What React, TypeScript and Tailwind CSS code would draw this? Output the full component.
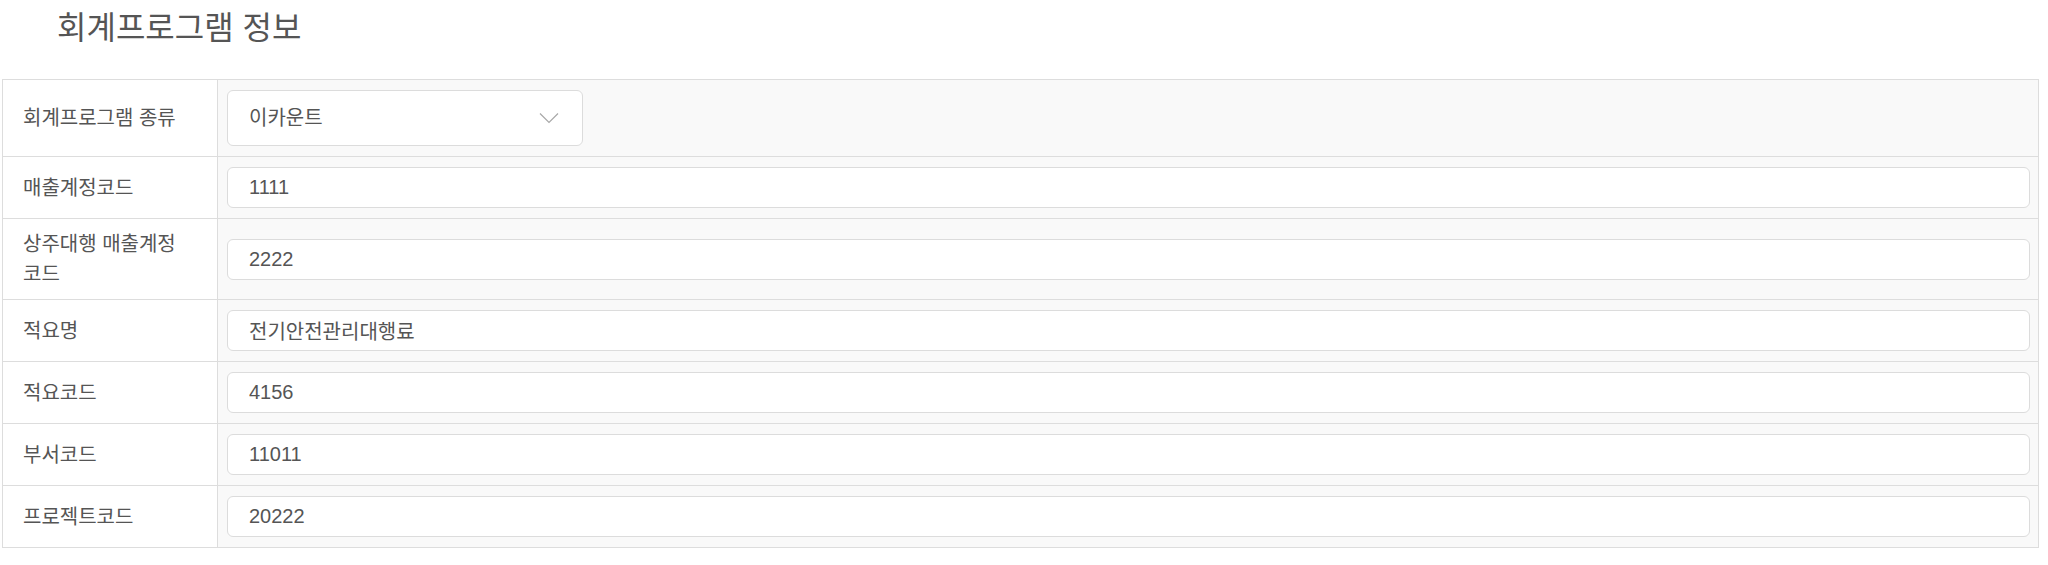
import React from "react";

const fields = [
    { label: "매출계정코드", value: "1111" },
    { label: "상주대행 매출계정 코드", value: "2222" },
    { label: "적요명", value: "전기안전관리대행료" },
    { label: "적요코드", value: "4156" },
    { label: "부서코드", value: "11011" },
    { label: "프로젝트코드", value: "20222" },
];

const ChevronDown = () => (
    <svg width="20" height="12" viewBox="0 0 20 12" fill="none" stroke="#a8a8a8" strokeWidth="1.2">
        <path d="M1 1.5 L10 10.5 L19 1.5" />
    </svg>
);

const LabelCell = ({ children }: { children: React.ReactNode }) => (
    <td className="w-[215px] border border-[#dddddd] bg-white px-5 py-[10px] text-left align-middle leading-[30px] text-[#555555]">
        {children}
    </td>
);

export default function App() {
    return (
        <div className="min-h-[565px] bg-white font-['Liberation_Sans','Noto_Sans_CJK_KR',sans-serif] text-[20px]">
            <h2 className="pl-[57px] pt-[4px] text-[32px] leading-[48px] font-normal text-[#555555]">
                회계프로그램 정보
            </h2>
            <div className="ml-[2px] mr-[9px] mt-[27px]">
                <table className="w-full border-collapse border border-[#dddddd]">
                    <tbody>
                        <tr>
                            <LabelCell>회계프로그램 종류</LabelCell>
                            <td className="border border-[#dddddd] bg-[#f9f9f9] py-[10px] pl-[9px] pr-[9px]">
                                <div className="flex h-[56px] w-[356px] items-center justify-between rounded-[6px] border border-[#dcdcdc] bg-white pl-[21px] pr-[23px] text-[#555555]">
                                    <span>이카운트</span>
                                    <ChevronDown />
                                </div>
                            </td>
                        </tr>
                        {fields.map((f) => (
                            <tr key={f.label}>
                                <LabelCell>{f.label}</LabelCell>
                                <td className="border border-[#dddddd] bg-[#f9f9f9] py-[10px] pl-[9px] pr-[8px]">
                                    <input
                                        readOnly
                                        value={f.value}
                                        className="block h-[41px] w-full rounded-[6px] border border-[#dcdcdc] bg-white pl-[21px] text-[20px] text-[#555555] outline-none"
                                    />
                                </td>
                            </tr>
                        ))}
                    </tbody>
                </table>
            </div>
        </div>
    );
}
